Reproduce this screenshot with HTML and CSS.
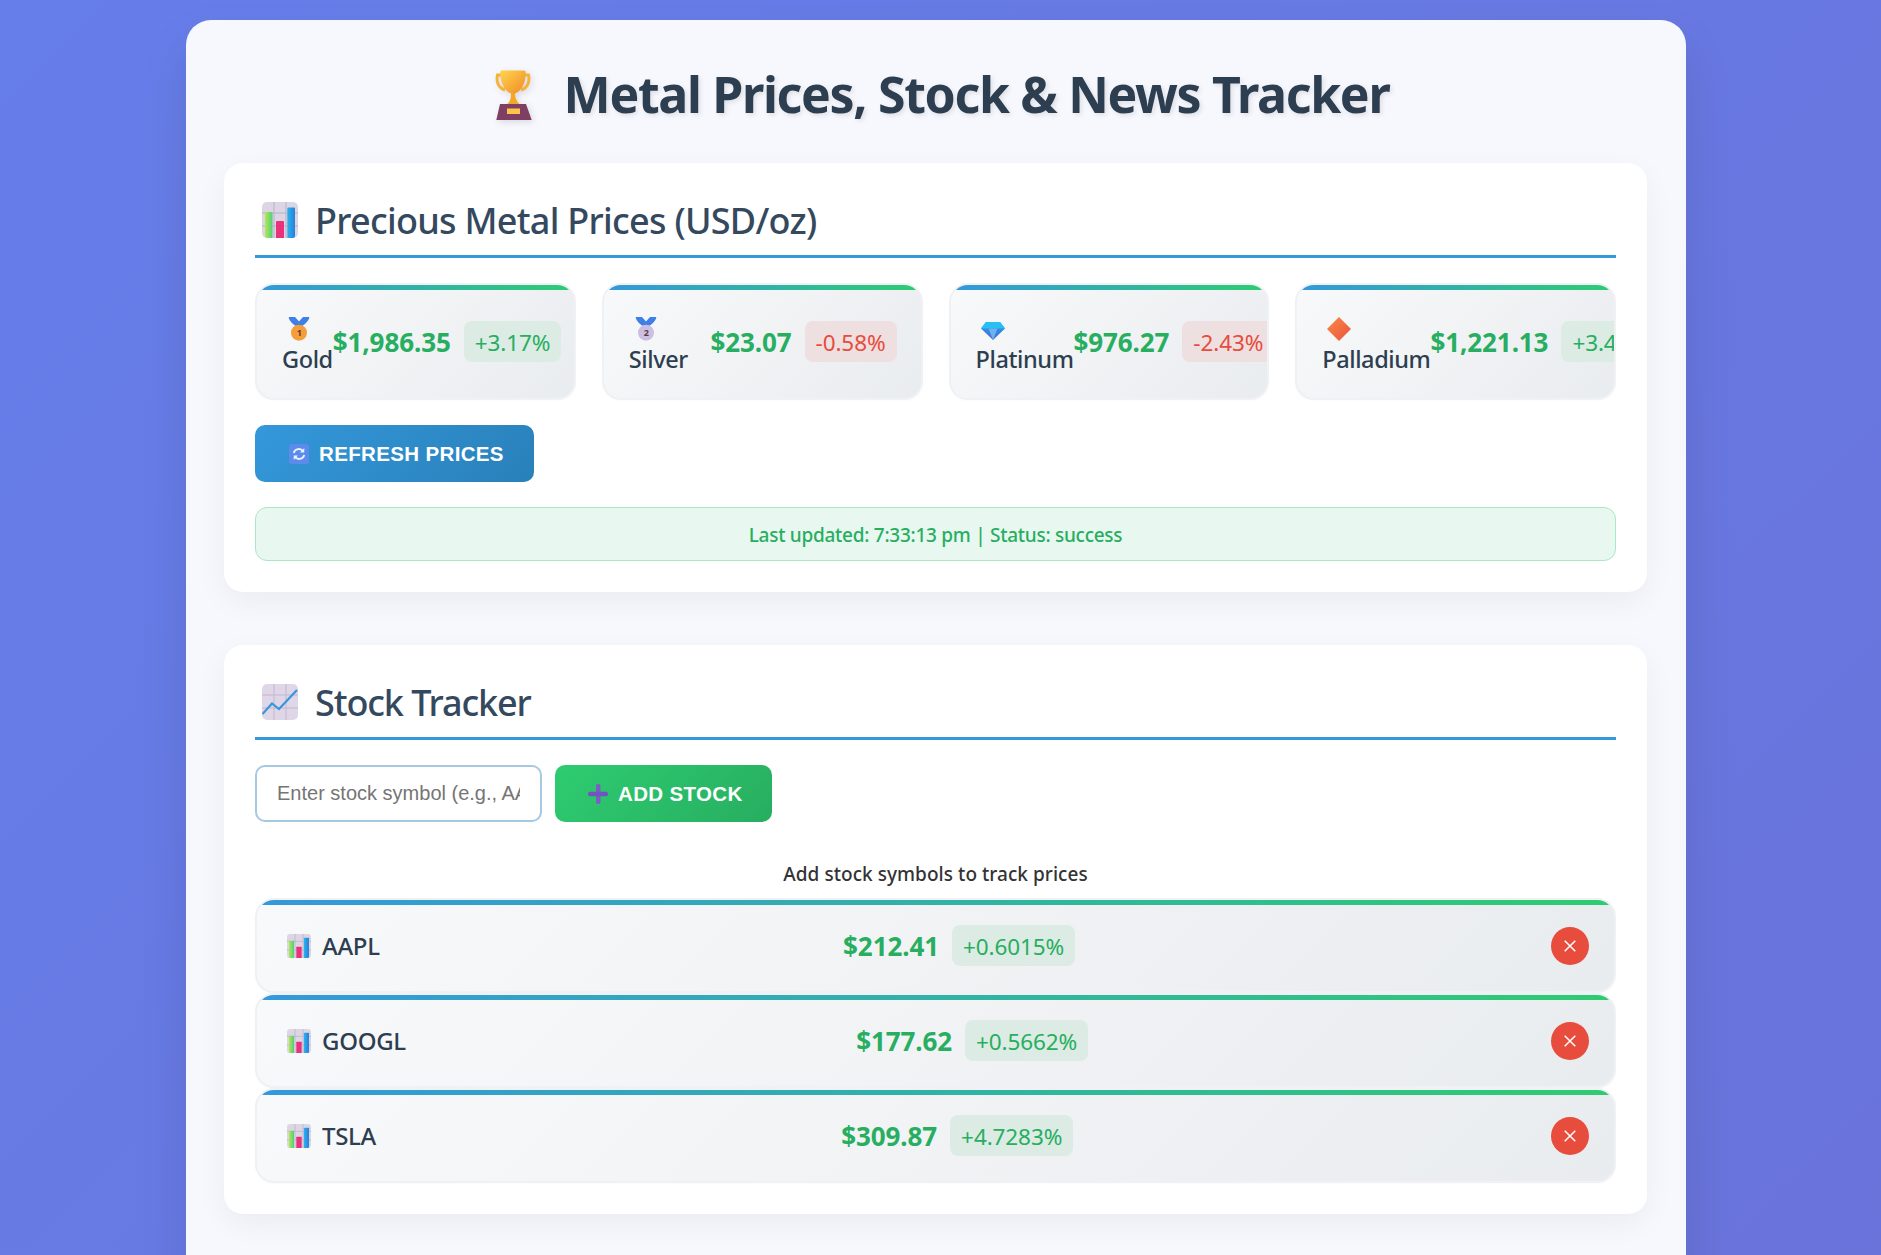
FILE: index.html
```html
<!DOCTYPE html>
<html>
   <head>
      <meta name="viewport" content="width=device-width, initial-scale=1">
      <title>Metal Prices, Stock &amp; News Tracker</title>
      <link rel="stylesheet" href="styles.css">
   </head>
   <body>
      <svg class="defs" width="0" height="0">
         <defs>
            <linearGradient id="cupGold" x1="0" y1="0" x2="1" y2="1">
               <stop offset="0" stop-color="#ffd54f"/>
               <stop offset="1" stop-color="#f08a24"/>
            </linearGradient>
            <linearGradient id="barGreen" x1="0" y1="0" x2="1" y2="0">
               <stop offset="0" stop-color="#b4e84e"/>
               <stop offset="1" stop-color="#4fd07a"/>
            </linearGradient>
            <linearGradient id="barBlue" x1="0" y1="0" x2="1" y2="0">
               <stop offset="0" stop-color="#2ab3f2"/>
               <stop offset="1" stop-color="#2a7fd6"/>
            </linearGradient>
            <linearGradient id="pallad" x1="0" y1="0" x2="1" y2="1">
               <stop offset="0" stop-color="#fb8a44"/>
               <stop offset="1" stop-color="#e9533f"/>
            </linearGradient>
            <linearGradient id="gemBody" x1="0" y1="0" x2="0" y2="1">
               <stop offset="0" stop-color="#2f9cec"/>
               <stop offset="1" stop-color="#3f6fd8"/>
            </linearGradient>
            <symbol id="trophy" viewBox="0 0 38 51">
               <path d="M8 6H3.500C2 13 4.500 19 11 21M30 6h4.500C36 13 33.500 19 27 21" fill="none" stroke="#f7b236" stroke-width="3"/>
               <path d="M8 1.500h22c1 0 1.700.7 1.700 1.700C31.700 16 26 24 19 25 12 24 6.300 16 6.300 3.200 6.300 2.200 7 1.500 8 1.500z" fill="url(#cupGold)"/>
               <path d="M17 24h4c0 5 1.500 8 4.500 11h-12c3-3 3.500-6 3.500-11z" fill="#f5a623"/>
               <path d="M6 35h26l5.700 16H2.300z" fill="#7f3f62"/>
               <rect x="13" y="39.500" width="13" height="5.500" fill="#fbc54c"/>
            </symbol>
            <symbol id="barchart" viewBox="0 0 36 36">
               <rect width="36" height="36" rx="5" fill="#dcd6e4"/>
               <path d="M12 0v36M24 0v36M0 11h36M0 24h36" stroke="#b9b1c6" stroke-width="1"/>
               <path d="M3 11q0-1 1-1h5.500q1 0 1 1v25H5q-2 0-2-2z" fill="url(#barGreen)"/>
               <path d="M14 20q0-1 1-1h6q1 0 1 1v16h-8z" fill="#e8327c"/>
               <path d="M25.300 6.500q0-1 1-1h5.700q1 0 1 1V34q0 2-2 2h-5.700z" fill="url(#barBlue)"/>
            </symbol>
            <symbol id="linechart" viewBox="0 0 36 36">
               <rect width="36" height="36" rx="5" fill="#dfd6e8"/>
               <path d="M12 0v36M24 0v36M0 11h36M0 24h36" stroke="#c3b8cf" stroke-width="1"/>
               <path d="M.5 30 10 19.500 17 25 35 6" fill="none" stroke="#3a96dc" stroke-width="2.200"/>
            </symbol>
            <symbol id="medal" viewBox="0 0 21 24">
               <path d="M0 0h6.500l4 4.500 4-4.500H21c-.5 3.500-4 7-7.500 9h-6C4 7 .5 3.500 0 0z" fill="#3f7fe8"/>
            </symbol>
            <symbol id="gem" viewBox="0 0 24 18">
               <path d="M5 0h14l5 6.500L12 18 0 6.500z" fill="url(#gemBody)"/>
               <path d="M5 0h14l5 6.500H0z" fill="#27c0f5"/>
               <path d="M7.500 6.500h9L12 18z" fill="#6fb0ee"/>
            </symbol>
            <symbol id="diamond" viewBox="0 0 24 24">
               <path d="M12 0 24 12 12 24 0 12z" fill="url(#pallad)"/>
            </symbol>
            <symbol id="refresh" viewBox="0 0 19 19">
               <rect width="19" height="19" rx="2.500" fill="#5c8bec"/>
               <path d="M4.500 8.500a5 5 0 0 1 9-1.500M14.500 10.500a5 5 0 0 1-9 1.500" fill="none" stroke="#e9f1fb" stroke-width="1.800"/>
               <path d="M14.500 3.800V8h-4zM4.500 15.200V11h4z" fill="#e9f1fb"/>
            </symbol>
            <symbol id="plus" viewBox="0 0 20 20">
               <rect x="8" y="0" width="4.500" height="20" rx="2" fill="#7c5cc4"/>
               <rect x="0" y="7.800" width="20" height="4.500" rx="2" fill="#6f55bd"/>
            </symbol>
            <symbol id="cross" viewBox="0 0 12 12">
               <path d="M.7.700l10.600 10.600M11.300.700.700 11.300" stroke="#fff" stroke-width="1.500"/>
            </symbol>
         </defs>
      </svg>

      <div class="container">
         <h1 class="page-title">
            <svg class="icon-trophy"><use href="#trophy"/></svg>
            <span>Metal Prices, Stock &amp; News Tracker</span>
         </h1>

         <section class="section">
            <h2 class="section-title">
               <svg class="icon-head"><use href="#barchart"/></svg>
               <span>Precious Metal Prices (USD/oz)</span>
            </h2>
            <div class="metal-grid">
               <div class="card metal-card">
                  <div class="metal-name">
                     <svg class="icon-metal" viewBox="0 0 21 24">
                        <use href="#medal" width="21" height="24"/>
                        <circle cx="10.500" cy="15.700" r="8" fill="#f59e38"/>
                        <text x="10.500" y="19" class="medal-num">1</text>
                     </svg>
                     <span>Gold</span>
                  </div>
                  <div class="quote">
                     <span class="price">$1,986.35</span>
                     <span class="change up">+3.17%</span>
                  </div>
               </div>
               <div class="card metal-card">
                  <div class="metal-name">
                     <svg class="icon-metal" viewBox="0 0 21 24">
                        <use href="#medal" width="21" height="24"/>
                        <circle cx="10.500" cy="15.700" r="8" fill="#cdbfe2"/>
                        <text x="10.500" y="19" class="medal-num">2</text>
                     </svg>
                     <span>Silver</span>
                  </div>
                  <div class="quote">
                     <span class="price">$23.07</span>
                     <span class="change down">-0.58%</span>
                  </div>
               </div>
               <div class="card metal-card">
                  <div class="metal-name">
                     <svg class="icon-gem"><use href="#gem"/></svg>
                     <span>Platinum</span>
                  </div>
                  <div class="quote">
                     <span class="price">$976.27</span>
                     <span class="change down">-2.43%</span>
                  </div>
               </div>
               <div class="card metal-card">
                  <div class="metal-name">
                     <svg class="icon-metal"><use href="#diamond"/></svg>
                     <span>Palladium</span>
                  </div>
                  <div class="quote">
                     <span class="price">$1,221.13</span>
                     <span class="change up">+3.42%</span>
                  </div>
               </div>
            </div>
            <button class="btn btn-blue">
               <svg class="icon-btn"><use href="#refresh"/></svg>
               Refresh Prices
            </button>
            <div class="status">Last updated: 7:33:13 pm | Status: success</div>
         </section>

         <section class="section">
            <h2 class="section-title tight">
               <svg class="icon-head"><use href="#linechart"/></svg>
               <span>Stock Tracker</span>
            </h2>
            <div class="stock-form">
               <input class="stock-input" type="text" placeholder="Enter stock symbol (e.g., AAPL)">
               <button class="btn btn-green">
                  <svg class="icon-btn"><use href="#plus"/></svg>
                  Add Stock
               </button>
            </div>
            <p class="hint">Add stock symbols to track prices</p>
            <div class="stock-list">
               <div class="card stock-row">
                  <div class="stock-name"><svg class="icon-stock"><use href="#barchart"/></svg><span>AAPL</span></div>
                  <div class="quote">
                     <span class="price">$212.41</span>
                     <span class="change up">+0.6015%</span>
                  </div>
                  <button class="remove"><svg class="icon-cross"><use href="#cross"/></svg></button>
               </div>
               <div class="card stock-row">
                  <div class="stock-name"><svg class="icon-stock"><use href="#barchart"/></svg><span>GOOGL</span></div>
                  <div class="quote">
                     <span class="price">$177.62</span>
                     <span class="change up">+0.5662%</span>
                  </div>
                  <button class="remove"><svg class="icon-cross"><use href="#cross"/></svg></button>
               </div>
               <div class="card stock-row">
                  <div class="stock-name"><svg class="icon-stock"><use href="#barchart"/></svg><span>TSLA</span></div>
                  <div class="quote">
                     <span class="price">$309.87</span>
                     <span class="change up">+4.7283%</span>
                  </div>
                  <button class="remove"><svg class="icon-cross"><use href="#cross"/></svg></button>
               </div>
            </div>
         </section>
      </div>
   </body>
</html>
```

FILE: styles.css
```css
* {
box-sizing: border-box;
}
html {
overflow: hidden;
height: 100%;
}
body {
margin: 0;
padding: 20px 29px 0 20px;
height: 100%;
font-family: "Noto Sans", "Open Sans", sans-serif;
color: #2c3e50;
background: linear-gradient(135deg, #667eea 0%, #764ba2 100%) no-repeat;
background-size: 100% 13000px;
}
.defs {
position: absolute;
}
.container {
max-width: 1500px;
min-height: 1300px;
margin: 0 auto;
padding: 38px 39px 0 38px;
background: #f7f8fd;
border-radius: 25px;
box-shadow: 0 25px 50px rgba(0, 0, 0, 0.1);
}
.page-title {
display: flex;
justify-content: center;
align-items: center;
gap: 32px;
height: 72px;
margin: 0 0 33px;
padding-left: 12px;
font-size: 50px;
font-weight: 700;
letter-spacing: -1.32px;
color: #2c3e50;
text-shadow: 2px 2px 5px rgba(0, 0, 0, 0.1);
}
.icon-trophy {
width: 38px;
height: 51px;
filter: drop-shadow(2px 2px 3px rgba(0, 0, 0, 0.12));
}
.section {
padding: 31px;
margin-bottom: 53px;
background: #fff;
border-radius: 19px;
box-shadow: 0 10px 30px rgba(0, 0, 0, 0.05);
}
.section-title {
display: flex;
align-items: center;
gap: 17px;
height: 64px;
margin: 0 0 25px;
padding: 0 0 9px 7px;
font-size: 36px;
font-weight: 500;
letter-spacing: -.72px;
color: #34495e;
border-bottom: 3px solid #3498db;
}
.section-title.tight {
letter-spacing: -1.1px;
}
.icon-head {
width: 36px;
height: 36px;
}
.metal-grid {
display: grid;
grid-template-columns: repeat(4, minmax(0, 1fr));
gap: 26px;
margin-bottom: 25px;
}
.card {
position: relative;
overflow: hidden;
background: linear-gradient(135deg, #f8f9fa 0%, #e9ecef 100%);
border: 2px solid #f0f1f4;
border-radius: 19px;
box-shadow: 0 1px 3px rgba(0, 0, 0, 0.02);
}
.card::before {
content: "";
position: absolute;
top: 0;
left: 0;
right: 0;
height: 5px;
background: linear-gradient(90deg, #3498db, #2ecc71);
}
.metal-card {
display: flex;
justify-content: space-between;
align-items: center;
height: 117px;
padding: 0 24px 0 25px;
}
.metal-name {
display: flex;
flex-direction: column;
flex-shrink: 0;
padding-top: 6px;
font-size: 23.500px;
font-weight: 500;
letter-spacing: -.4px;
line-height: 28px;
}
.icon-metal {
display: block;
width: 24px;
height: 24px;
margin: 0 0 4px 5px;
}
.icon-gem {
display: block;
width: 24px;
height: 18px;
margin: 5px 0 5px 5px;
}
.medal-num {
font-size: 9px;
font-weight: 700;
text-anchor: middle;
fill: #5a3a4a;
}
.quote {
display: flex;
align-items: center;
flex-shrink: 0;
gap: 13px;
}
.price {
padding-top: 1px;
font-size: 26px;
font-weight: 700;
letter-spacing: -.1px;
color: #27ae60;
}
.change {
padding: 0 11px;
height: 41px;
line-height: 43px;
font-size: 22.500px;
letter-spacing: -.1px;
border-radius: 8px;
}
.change.up {
color: #27ae60;
background: #dcebe4;
}
.change.down {
color: #e74c3c;
background: #eedfe0;
}
.btn {
display: inline-flex;
align-items: center;
height: 57px;
padding-top: 1px;
border: 0;
border-radius: 10px;
font-family: "Liberation Sans", Arial, sans-serif;
font-size: 20.500px;
font-weight: 700;
letter-spacing: .35px;
text-transform: uppercase;
color: #fff;
}
.btn-blue {
width: 279px;
padding-left: 34px;
gap: 10px;
background: linear-gradient(135deg, #3498db, #2980b9);
}
.btn-green {
width: 217px;
padding-left: 33px;
gap: 10px;
background: linear-gradient(135deg, #2ecc71, #27ae60);
}
.icon-btn {
width: 20px;
height: 20px;
}
.status {
height: 54px;
margin-top: 25px;
line-height: 55px;
text-align: center;
font-size: 19px;
font-weight: 500;
letter-spacing: -.27px;
color: #27ae60;
background: #e8f8f0;
border: 1px solid #a9e8c5;
border-radius: 12px;
}
.stock-form {
display: flex;
gap: 13px;
}
.stock-input {
width: 287px;
height: 57px;
padding: 0 20px;
font-family: "Liberation Sans", Arial, sans-serif;
font-size: 20px;
background: #fff;
border: 2.500px solid #a6c9e2;
border-radius: 10px;
}
.stock-input::placeholder {
color: #757575;
}
.hint {
margin: 39px 0 11px;
line-height: 26px;
text-align: center;
font-size: 19px;
font-weight: 500;
letter-spacing: .05px;
color: #333;
}
.stock-row {
display: flex;
justify-content: space-between;
align-items: center;
height: 95px;
padding: 0 25px;
}
.stock-name {
display: flex;
align-items: center;
font-size: 24px;
font-weight: 500;
letter-spacing: -.3px;
}
.icon-stock {
width: 24px;
height: 24px;
margin: 0 11px 0 5px;
}
.remove {
display: flex;
justify-content: center;
align-items: center;
width: 38px;
height: 38px;
margin-left: 12.500px;
padding: 0;
border: 0;
border-radius: 50%;
background: #e74c3c;
}
.icon-cross {
width: 12px;
height: 12px;
}
```
